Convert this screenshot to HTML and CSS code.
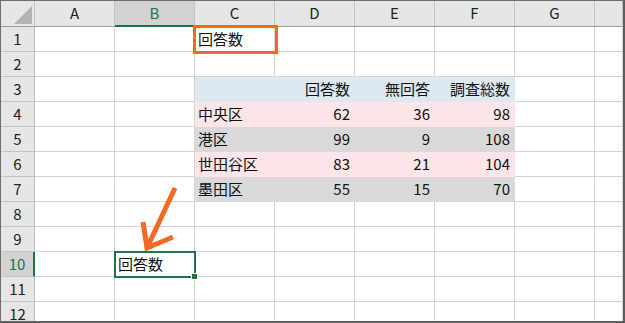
FILE: index.html
```html
<!DOCTYPE html>
<html lang="ja">
    <head>
        <meta charset="UTF-8">
        <title>回答数</title>
        <link rel="stylesheet" href="styles.css">
    </head>
    <body>
        <div class="sheet">
            <div class="corner"><span class="tri"></span></div>
            <div class="ch">A</div>
            <div class="ch sel">B</div>
            <div class="ch">C</div>
            <div class="ch">D</div>
            <div class="ch">E</div>
            <div class="ch">F</div>
            <div class="ch">G</div>
            <div class="ch"></div>

            <div class="rh">1</div>
            <div class="c"></div><div class="c"></div>
            <div class="c">回答数</div>
            <div class="c"></div><div class="c"></div><div class="c"></div><div class="c"></div><div class="c"></div>

            <div class="rh">2</div>
            <div class="c"></div><div class="c"></div><div class="c"></div><div class="c"></div><div class="c"></div><div class="c"></div><div class="c"></div><div class="c"></div>

            <div class="rh">3</div>
            <div class="c"></div><div class="c"></div>
            <div class="c blue"></div>
            <div class="c blue num">回答数</div>
            <div class="c blue num">無回答</div>
            <div class="c blue num">調査総数</div>
            <div class="c"></div><div class="c"></div>

            <div class="rh">4</div>
            <div class="c"></div><div class="c"></div>
            <div class="c pink">中央区</div>
            <div class="c pink num">62</div>
            <div class="c pink num">36</div>
            <div class="c pink num">98</div>
            <div class="c"></div><div class="c"></div>

            <div class="rh">5</div>
            <div class="c"></div><div class="c"></div>
            <div class="c gray">港区</div>
            <div class="c gray num">99</div>
            <div class="c gray num">9</div>
            <div class="c gray num">108</div>
            <div class="c"></div><div class="c"></div>

            <div class="rh">6</div>
            <div class="c"></div><div class="c"></div>
            <div class="c pink">世田谷区</div>
            <div class="c pink num">83</div>
            <div class="c pink num">21</div>
            <div class="c pink num">104</div>
            <div class="c"></div><div class="c"></div>

            <div class="rh">7</div>
            <div class="c"></div><div class="c"></div>
            <div class="c gray">墨田区</div>
            <div class="c gray num">55</div>
            <div class="c gray num">15</div>
            <div class="c gray num">70</div>
            <div class="c"></div><div class="c"></div>

            <div class="rh">8</div>
            <div class="c"></div><div class="c"></div><div class="c"></div><div class="c"></div><div class="c"></div><div class="c"></div><div class="c"></div><div class="c"></div>

            <div class="rh">9</div>
            <div class="c"></div><div class="c"></div><div class="c"></div><div class="c"></div><div class="c"></div><div class="c"></div><div class="c"></div><div class="c"></div>

            <div class="rh sel">10</div>
            <div class="c"></div>
            <div class="c active">回答数<span class="handle"></span></div>
            <div class="c"></div><div class="c"></div><div class="c"></div><div class="c"></div><div class="c"></div><div class="c"></div>

            <div class="rh">11</div>
            <div class="c"></div><div class="c"></div><div class="c"></div><div class="c"></div><div class="c"></div><div class="c"></div><div class="c"></div><div class="c"></div>

            <div class="rh">12</div>
            <div class="c"></div><div class="c"></div><div class="c"></div><div class="c"></div><div class="c"></div><div class="c"></div><div class="c"></div><div class="c"></div>

            <div class="mark"></div>
            <svg class="arrow" width="60" height="80" viewBox="0 0 60 80">
                <path d="M45 8 L17 68" />
                <path d="M13 42 L17 68 L43 57" />
            </svg>
        </div>
    </body>
</html>
```

FILE: styles.css
```css
html,body {
    margin: 0;
    background: #fff;
}
.sheet {
    position: relative;
    width: 625px;
    height: 323px;
    box-sizing: border-box;
    border-top: 1px solid #6e6e6e;
    border-left: 1px solid #6e6e6e;
    border-right: 2px solid #5e5e5e;
    border-bottom: 2px solid #5e5e5e;
    overflow: hidden;
    display: grid;
    grid-template-columns: 34px repeat(7, 80px) 1fr;
    grid-template-rows: 26px repeat(11, 25px) 1fr;
    font-family: "Noto Sans CJK JP", "Noto Sans", sans-serif;
    font-size: 15px;
    color: #111;
}
.sheet > div {
    box-sizing: border-box;
    line-height: 23px;
    white-space: nowrap;
}

.corner {
    position: relative;
    background: #e6e6e6;
    border-right: 1px solid #c4c4c4;
    border-bottom: 1px solid #9c9c9c;
}
.corner .tri {
    position: absolute;
    right: 2px;
    bottom: 2px;
    width: 0;
    height: 0;
    border-left: 18px solid transparent;
    border-bottom: 18px solid #b4b4b4;
}
.ch {
    background: #e6e6e6;
    text-align: center;
    color: #222;
    border-right: 1px solid #c4c4c4;
    border-bottom: 1px solid #9c9c9c;
}
.ch.sel {
    background: #d2d2d2;
    color: #217346;
    border-bottom: 2px solid #217346;
}
.rh {
    background: #e6e6e6;
    text-align: center;
    color: #222;
    border-right: 1px solid #b8b8b8;
    border-bottom: 1px solid #c4c4c4;
}
.rh.sel {
    background: #d2d2d2;
    color: #217346;
    border-right: 2px solid #217346;
}

.c {
    padding: 0 3px;
    border-right: 1px solid #d4d4d4;
    border-bottom: 1px solid #d4d4d4;
}
.c.num {
    text-align: right;
    padding-right: 4px;
}
.c.blue {
    background: #dee8f0;
    border-color: #dee8f0;
}
.c.pink {
    background: #fbe5e6;
    border-color: #fbe5e6;
}
.c.gray {
    background: #d9d9d9;
    border-color: #d9d9d9;
}
.c.active {
    position: relative;
    outline: 2px solid #217346;
    outline-offset: -1px;
    z-index: 1;
}
.c.active .handle {
    position: absolute;
    right: -4px;
    bottom: -4px;
    width: 5px;
    height: 5px;
    background: #217346;
    border: 1px solid #fff;
}

.mark {
    position: absolute;
    left: 192px;
    top: 24px;
    width: 85px;
    height: 29px;
    box-sizing: border-box;
    border: 3px solid #f0682a;
}
.arrow {
    position: absolute;
    left: 129px;
    top: 179px;
    fill: none;
    stroke: #f26a24;
    stroke-width: 5;
    stroke-linejoin: miter;
}
```
